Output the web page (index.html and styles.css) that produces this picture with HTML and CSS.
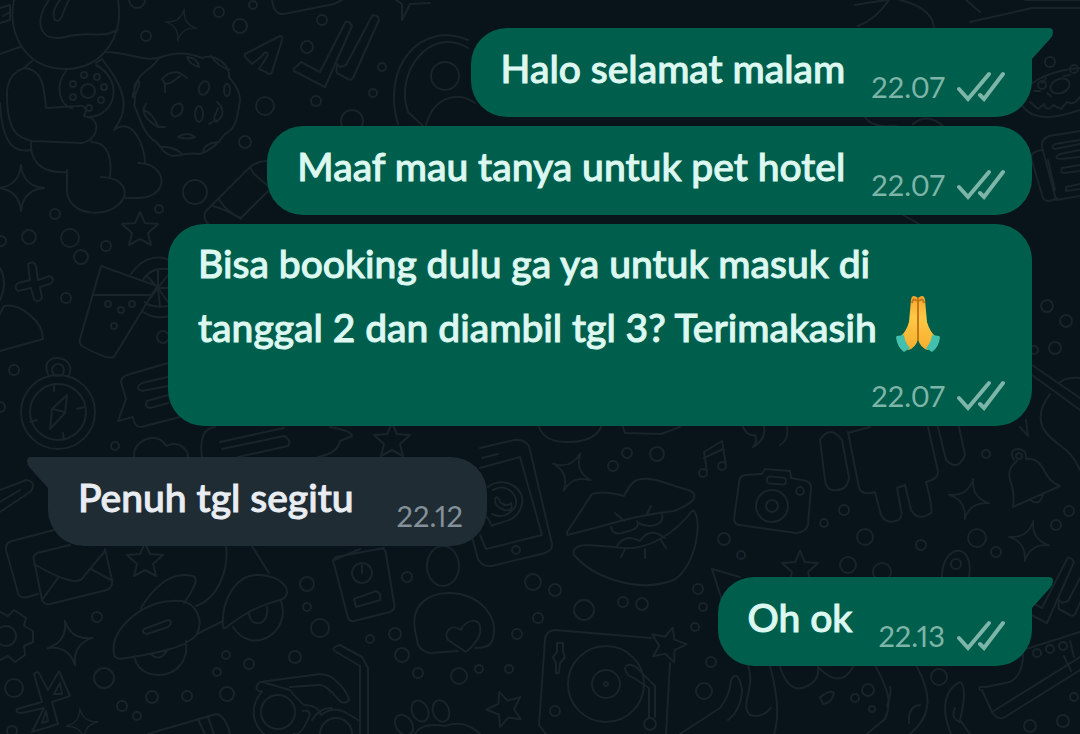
FILE: index.html
```html
<!DOCTYPE html>
<html lang="id">
<head>
<meta charset="utf-8">
<meta name="viewport" content="width=device-width, initial-scale=1">
<title>Chat</title>
<link rel="stylesheet" href="styles.css">
</head>
<body>
<svg class="wallpaper" viewBox="0 0 1080 734" preserveAspectRatio="xMidYMid slice" aria-hidden="true">
  <defs>
    <path id="spark" d="M0-23Q2-2 23 0Q2 2 0 23Q-2 2-23 0Q-2-2 0-23Z"/>
    <path id="star" d="M0-17L5-6L18-5L8 4L11 16L0 10L-11 16L-8 4L-18-5L-5-6Z"/>
    <g id="checks"><path d="M-35 21L-31 17L-12 27L13-22Q14-25 18-22L20-19L-7 42L-38 26Q-40 24-35 21Z"/><path d="M5 19L8 22L14 20L40-29Q42-31 46-28L47-25L21 33Q19 36 16 34L5 28Q4 26 5 19Z"/></g>
  </defs>

  <!-- astronaut -->
  <path d="M14 0C7 35 26 70 68 69C104 67 124 35 118 0M49 0C34 20 38 43 65 37C91 30 104 40 118 29M60 0C53 9 52 15 55 20C62 25 63 9 69 0M0 54L20 47M32 61L24 68C4 75 6 94 8 112C11 134 20 138 32 141L82 143C96 140 101 125 91 118L84 116C88 108 84 105 78 106L46 108C44 90 44 69 24 68M31 142C30 158 38 174 67 172M0 103C2 145 15 153 30 150M91 142C109 142 112 160 110 176M101 177C119 177 127 187 124 197C114 220 67 218 67 190V170M96 63L102 59C120 82 133 105 115 128M114 130C133 115 145 148 145 162M138 163C159 162 169 183 155 193C145 201 130 197 124 198M105 52C125 51 145 63 161 57"/>
  <path d="M66 71C54 86 60 106 72 108M96 65C125 81 115 116 89 117"/>
  <circle cx="88" cy="91" r="7"/><circle cx="84" cy="75" r="3"/><circle cx="97" cy="77" r="3"/><circle cx="104" cy="87" r="3"/><circle cx="101" cy="100" r="3"/><circle cx="89" cy="108" r="3"/><circle cx="73" cy="97" r="3"/><circle cx="73" cy="84" r="3"/>
  <!-- moon -->
  <path d="M138 80C142 70 152 70 159 58C176 51 190 53 202 58C217 53 230 66 229 77C240 90 240 97 240 101C237 117 237 128 225 134C218 143 212 150 200 154C189 152 183 155 173 156C160 153 162 144 152 139C142 130 141 120 134 105C138 96 130 88 138 80ZM138 80Q130 100 134 97Q142 82 138 80M187 57Q190 65 199 67Q198 58 187 57M211 56Q218 66 229 70M162 79Q170 70 180 73L187 78M180 76Q168 86 165 83L165 92M162 79L165 84M146 104Q138 115 158 127L165 127M143 110Q152 112 158 126M160 147Q172 146 181 153M203 151Q205 143 219 142M217 102Q224 108 222 115Q216 126 214 118L218 108M209 124L216 120M178 137Q187 131 195 137Q187 140 178 137"/>
  <ellipse cx="204" cy="88" rx="5" ry="7" transform="rotate(20 204 88)"/><ellipse cx="227" cy="90" rx="3" ry="6"/><ellipse cx="177" cy="110" rx="5" ry="7" transform="rotate(35 177 110)"/><ellipse cx="199" cy="114" rx="4" ry="8"/>
  <!-- tube -->
  <path d="M268 161Q257 161 250 167L206 211Q202 217 208 224M250 167L254 174L268 186M213 206Q225 209 241 219M219 199Q226 212 241 218L268 191"/>
  <!-- cocktail -->
  <path d="M101 266L157 286L114 357Q107 360 82 346Q79 343 80 339ZM93 295H150M131 274C145 253 164 256 172 262M143 312Q155 320 170 316M143 280Q150 267 168 269M158 288L147 276M158 288L149 300M158 288L158 269M158 288L168 275M158 288L168 302M158 288L160 306M158 288L170 288M145 302Q150 308 168 306"/>
  <circle cx="108" cy="304" r="3"/><circle cx="121" cy="310" r="3"/><circle cx="132" cy="304" r="3"/><circle cx="114" cy="326" r="3"/>
  <path d="M28 264Q34 260 36 266L38 280L50 276Q56 280 50 284L40 287L42 298Q38 304 34 299L31 288L18 291Q13 287 18 283L30 280ZM0 268Q8 282 0 300M0 314L4 306C20 303 43 321 43 339L0 351"/>
  <!-- compass -->
  <path d="M49 376C42 364 50 357 58 358C70 359 73 369 68 377"/><circle cx="58" cy="370" r="6"/><circle cx="58" cy="412" r="37"/><circle cx="58" cy="412" r="28"/><path d="M67 395L65 413L50 429L52 409ZM53 409L64 412M54 384V391M30 422L37 420M64 440L63 433M84 407L77 409"/>
  <!-- notes and speech bubble -->
  <path d="M168 363L130 374Q121 376 121 382L126 399L118 421L133 417Q134 427 141 427L180 417M168 377L142 383Q134 388 142 391L168 386M168 395L147 401Q144 407 150 408L168 403M134 457C132 440 158 430 166 446C180 440 188 450 188 457M202 457Q198 429 215 427M330 427Q352 431 352 436L340 441Q338 453 318 457M220 442L284 428M222 449L284 436Q292 440 288 446L238 457M0 490L26 480Q38 482 30 492L0 512M0 502L20 490"/>
  <!-- envelope, gear -->
  <path d="M54 530L12 541Q5 543 6 550L18 593Q20 599 28 597L38 594M70 545L37 553Q32 556 34 560L42 600Q44 605 50 604L107 590Q113 587 112 580L105 549M34 564Q78 590 84 576L105 551M58 578L42 600M91 569L111 580M0 612L8 616L14 610L26 618L24 626L33 631V642L24 646L25 655L15 662L8 656L0 660"/><circle cx="6" cy="636" r="10"/>
  <!-- rocket car -->
  <path d="M114 653C109 629 146 597 181 601C196 603 204 620 197 634C185 650 145 655 120 659Q114 658 114 653ZM141 608C158 580 175 572 193 576Q201 579 184 603M196 606C219 598 229 568 226 546M223 627C221 602 235 573 260 575C287 577 294 596 280 600C253 607 240 617 228 626Q223 630 223 627M252 546L269 573M197 634L223 621M135 659C141 684 191 681 186 641M151 654Q160 663 168 649M233 627C252 657 292 632 281 601M249 613C250 629 270 626 267 607M144 629L168 620Q174 622 168 627L147 634Q141 633 144 629Z"/>
  <!-- bluetooth and glasses -->
  <path d="M34 674Q38 670 40 675L48 690L59 671L70 696L52 702L58 724L32 732L44 708L22 713Q15 713 17 709L42 702ZM54 694L60 683L62 694ZM42 723L46 711L48 721ZM148 734L216 714Q226 716 230 734M198 719L205 734M208 717L214 734M262 692Q252 690 260 682L320 674C337 674 348 695 349 700Q344 706 338 699Q326 684 318 685L290 687M262 682L290 690Q298 700 304 705Q318 705 321 715Q334 705 348 714L360 721M262 691C247 710 255 726 264 734M303 711Q308 709 310 714Q302 736 294 734M360 734V666L338 653Q328 648 340 645L362 657L368 668V734"/><circle cx="278" cy="712" r="17"/><circle cx="336" cy="734" r="16"/><path d="M312 720Q320 707 332 708"/>
  <!-- power tag -->
  <path d="M384 548L336 557Q331 560 334 564L348 618Q350 622 354 621L390 612Q396 609 394 603L386 554Q385 547 380 549M334 560L360 549"/><circle cx="362" cy="573" r="10"/><path d="M362 565V573M354 599L376 591Q382 593 380 600L356 607Z"/>
  <!-- laptop, sent checks, portrait -->
  <path d="M272 0Q274 15 284 14L334 4L342 0M245 54L280 36Q283 36 282 40L272 72Q270 76 266 72L259 69L268 55Q266 49 262 56L252 64L245 57Z"/><use href="#checks" x="332" y="45"/>
  <path d="M468 40C420 20 381 67 398 124M468 48C430 25 394 73 408 112L423 126M426 125C434 96 458 91 475 103M396 0L402 4L402 20L410 4L430 3"/><circle cx="445" cy="76" r="14"/>
  <!-- phone -->
  <path d="M480 448L514 440Q525 439 529 446L552 544Q553 550 545 553L492 566Q482 567 478 559L470 530M480 468L520 457L542 535L486 549L480 535M482 458L498 454"/><path d="M488 487C503 475 526 488 522 504C518 523 500 521 492 526L487 517"/><path d="M493 490C508 482 520 497 515 507C507 518 498 517 492 514M495 499Q497 494 500 502Q506 508 511 503Q514 512 504 510Q494 506 495 499"/>
  <!-- lips -->
  <path d="M567 532L592 494Q603 490 624 496C632 480 637 476 656 480L691 491C701 498 687 506 674 511C635 515 605 526 567 535ZM574 555C570 540 600 546 624 548C650 550 676 532 693 510C703 518 697 565 674 580C634 595 590 574 574 555ZM611 527Q612 535 622 533C633 530 641 528 637 521M638 523C650 529 665 525 662 514M617 546Q625 533 640 541Q650 526 665 538M615 513L624 521M651 506L647 514M621 557L625 549M645 558V549M666 548L661 540M539 427Q545 443 570 442Q595 441 601 427M623 427L625 433L661 434L680 427"/>
  <!-- music and camera -->
  <path d="M707 471L704 452L722 441L726 465M704 458L723 449"/><circle cx="703" cy="473" r="4"/><circle cx="722" cy="466" r="4"/><path d="M743 427Q748 437 755 435Q758 442 753 447Q766 440 764 427M780 445Q789 440 787 427M761 474L745 475Q739 476 739 483L734 519Q735 525 740 525L796 533Q806 532 808 525L811 487Q811 481 802 480L791 478L790 471L765 469L762 474"/><circle cx="772" cy="506" r="16"/><circle cx="772" cy="506" r="6"/><circle cx="800" cy="491" r="4"/><rect x="767" y="477" width="19" height="7" rx="3" transform="rotate(5 776 480)"/>
  <!-- robot and bell -->
  <path d="M820 440Q830 424 842 440L849 478Q847 490 837 490Q827 492 825 480ZM848 432L859 488Q863 496 875 492L881 515Q886 525 899 520Q903 515 901 510L897 488L905 485L911 510Q918 522 931 513Q933 509 926 482Q939 479 938 471L928 427M848 433L870 427M938 427L946 460Q958 472 965 455L959 427M1017 461Q1007 468 1010 480Q1015 492 1013 507L1060 486Q1050 482 1045 472Q1038 457 1026 459M1030 500Q1040 507 1043 494M1014 460Q1008 449 1019 449Q1027 450 1026 459"/><circle cx="1019" cy="456" r="3"/>
  <path d="M1020 427L1028 436L1026 420M1032 375L1080 410M1032 365L1080 398M1080 378Q1067 377 1060 382M1050 394C1028 424 1050 438 1061 446Q1073 454 1080 470M942 577C942 543 975 541 969 577"/><circle cx="956" cy="564" r="5"/>
  <!-- donut and books -->
  <path d="M1025 0L1080 0M970 22L1032 8H1080M980 12L966 0M1080 68C1050 70 1022 83 1020 102C1030 122 1055 119 1080 110M1030 102L1038 109L1044 104Q1047 113 1053 105L1061 109L1067 102Q1074 106 1080 97M1040 91H1034M1051 96L1047 93M1062 93L1066 91M1046 78L1042 83M1064 76L1070 75M1080 131L1049 136Q1041 139 1042 147L1056 200L1080 196M1042 150Q1030 152 1031 158L1043 198Q1047 204 1057 198M1048 160L1055 190M1080 140L1055 144Q1050 147 1055 149L1080 144M1080 150L1060 154Q1053 158 1060 159L1080 157M1080 165L1062 168Q1060 173 1064 173L1080 171M1080 184L1066 187V191L1080 189"/><ellipse cx="1060" cy="86" rx="10" ry="7" transform="rotate(-22 1060 86)"/>
  <use href="#checks" x="1054" y="581"/>
  <path d="M980 690Q977 686 986 687L1010 682Q1024 675 1023 650L1080 632M982 690L992 712Q998 721 1005 717L1080 670M992 712L1080 657M1070 641L1074 657M1064 656L1071 671"/><circle cx="1037" cy="653" r="4"/><circle cx="1050" cy="649" r="4"/><circle cx="1063" cy="646" r="4"/>
  <!-- chick, paw, turntable -->
  <ellipse cx="443" cy="566" rx="16" ry="20"/><path d="M417 639C405 600 435 590 460 594C490 601 501 628 490 644Q486 648 475 648M458 651L430 653Q417 650 417 639M466 652L448 640C442 630 454 624 461 630C466 618 482 618 480 629Q482 638 466 652M415 734Q421 722 445 726Q465 719 480 734"/><ellipse cx="420" cy="711" rx="8" ry="11" transform="rotate(-25 420 711)"/><ellipse cx="441" cy="711" rx="8" ry="11" transform="rotate(-20 441 711)"/><ellipse cx="404" cy="725" rx="8" ry="11" transform="rotate(-35 404 725)"/>
  <path d="M651 638L555 630Q545 631 545 640L539 725L546 734M670 663L666 734M557 643H563V652L565 657L560 663L559 673H556V663L553 657L557 652ZM626 666Q630 663 636 667L655 686V717M625 668Q626 676 634 678L649 688V718"/><circle cx="606" cy="684" r="38"/><circle cx="606" cy="684" r="14"/><circle cx="606" cy="684" r="2"/><circle cx="650" cy="724" r="6"/>
  <!-- foliage along the bottom -->
  <path d="M712 569L728 619M712 569L740 577M680 734L720 708Q730 695 731 680Q738 668 742 690Q741 710 728 720M748 665C756 690 739 704 750 715Q761 719 771 708M770 666Q782 710 774 734M780 667Q789 694 805 687Q820 681 818 667M818 667Q840 690 853 667M876 667C884 683 894 699 885 719Q875 727 867 734M917 667C935 700 928 719 910 734M951 734C939 705 947 688 960 682Q968 687 960 720L970 734M890 687Q892 691 887 706M920 705Q908 706 909 723M955 708Q950 718 960 722M820 697Q831 689 834 693Q832 703 823 704Z"/>
  <path d="M855 5Q884 0 889 0Q875 20 858 26M900 0Q932 8 934 27M865 117Q872 128 896 126M913 124Q927 112 943 126M903 215Q912 220 919 224M0 8L10 5V20L0 23M10 12L3 16"/>
  <use href="#spark" transform="translate(181 25) rotate(12) scale(.7)"/><use href="#spark" x="21" y="188"/><use href="#spark" transform="translate(70 643) rotate(-13)"/><use href="#spark" transform="translate(82 724) rotate(-8) scale(.7)"/><use href="#spark" transform="translate(572 472) rotate(24) scale(.9)"/><use href="#spark" transform="translate(969 499) rotate(12) scale(.9)"/><use href="#spark" transform="translate(1029 541) rotate(12) scale(.9)"/>
  <use href="#star" transform="translate(140 229)"/><use href="#star" transform="translate(145 560)"/><use href="#star" transform="translate(392 440)"/><use href="#star" transform="translate(800 568)"/><use href="#star" transform="translate(505 708) rotate(-20)"/><use href="#star" transform="translate(668 644) rotate(16)"/>
  <!-- bubbles between the doodles -->
  <circle cx="137" cy="0" r="8"/><circle cx="146" cy="36" r="5"/><circle cx="219" cy="12" r="5"/><circle cx="253" cy="5" r="4"/><circle cx="240" cy="26" r="7"/><circle cx="265" cy="106" r="9"/><circle cx="245" cy="142" r="6"/><circle cx="195" cy="192" r="12"/><circle cx="159" cy="209" r="4"/><circle cx="55" cy="214" r="5"/><circle cx="29" cy="237" r="7"/><circle cx="70" cy="238" r="9"/><circle cx="81" cy="257" r="7"/><circle cx="106" cy="246" r="5"/><circle cx="1" cy="241" r="5"/><circle cx="66" cy="298" r="5"/><circle cx="163" cy="337" r="6"/><circle cx="14" cy="370" r="5"/><circle cx="0" cy="407" r="5"/><circle cx="115" cy="446" r="4"/><circle cx="322" cy="20" r="5"/><circle cx="307" cy="47" r="6"/><circle cx="382" cy="67" r="4"/><circle cx="373" cy="93" r="4"/><circle cx="316" cy="101" r="5"/><circle cx="352" cy="121" r="11"/>
  <circle cx="97" cy="617" r="5"/><circle cx="14" cy="688" r="9"/><circle cx="104" cy="678" r="10"/><circle cx="122" cy="706" r="5"/><circle cx="137" cy="716" r="4"/><circle cx="152" cy="697" r="6"/><circle cx="187" cy="696" r="5"/><circle cx="226" cy="655" r="4"/><circle cx="249" cy="664" r="5"/><circle cx="217" cy="672" r="4"/><circle cx="227" cy="694" r="7"/><circle cx="295" cy="657" r="6"/><circle cx="307" cy="584" r="7"/><circle cx="307" cy="607" r="4"/><circle cx="320" cy="628" r="9"/><circle cx="12" cy="731" r="5"/><circle cx="407" cy="577" r="5"/><circle cx="395" cy="634" r="6"/><circle cx="370" cy="639" r="4"/><circle cx="402" cy="655" r="7"/><circle cx="418" cy="673" r="5"/><circle cx="459" cy="676" r="8"/><circle cx="479" cy="669" r="4"/><circle cx="509" cy="669" r="4"/><circle cx="517" cy="634" r="5"/><circle cx="538" cy="618" r="5"/><circle cx="533" cy="582" r="8"/><circle cx="555" cy="590" r="6"/><circle cx="584" cy="610" r="10"/><circle cx="623" cy="602" r="5"/><circle cx="642" cy="604" r="6"/><circle cx="555" cy="711" r="5"/><circle cx="516" cy="550" r="4"/>
  <circle cx="613" cy="466" r="5"/><circle cx="627" cy="453" r="5"/><circle cx="657" cy="454" r="7"/><circle cx="724" cy="539" r="6"/><circle cx="741" cy="555" r="4"/><circle cx="698" cy="589" r="5"/><circle cx="703" cy="607" r="4"/><circle cx="695" cy="627" r="4"/><circle cx="711" cy="662" r="5"/><circle cx="704" cy="691" r="8"/><circle cx="824" cy="523" r="4"/><circle cx="844" cy="510" r="5"/><circle cx="865" cy="537" r="8"/><circle cx="921" cy="545" r="5"/><circle cx="977" cy="538" r="9"/><circle cx="996" cy="552" r="5"/><circle cx="986" cy="454" r="4"/><circle cx="1056" cy="525" r="5"/><circle cx="1069" cy="511" r="5"/><circle cx="848" cy="565" r="8"/><circle cx="882" cy="572" r="9"/><circle cx="1050" cy="62" r="5"/><circle cx="1074" cy="69" r="4"/><circle cx="1042" cy="85" r="4"/><circle cx="1047" cy="306" r="6"/><circle cx="1066" cy="321" r="6"/><circle cx="1034" cy="350" r="4"/><circle cx="1055" cy="348" r="6"/><circle cx="939" cy="677" r="8"/><circle cx="868" cy="690" r="6"/><circle cx="855" cy="698" r="4"/><circle cx="872" cy="709" r="3"/><circle cx="1030" cy="726" r="6"/><circle cx="1063" cy="721" r="6"/><circle cx="1074" cy="697" r="4"/>
</svg>

<svg class="symbols" aria-hidden="true">
  <symbol id="read" viewBox="0 0 48 32"><path d="M2 18L11 28L32 3M23 24L27 28L46 3" fill="none" stroke="currentColor" stroke-width="4" stroke-linecap="round" stroke-linejoin="miter"/></symbol>
  <symbol id="tail" viewBox="0 0 22 32"><path d="M0 0H17Q21 0 21 4Q21 8 18 11L0 31Z" fill="currentColor"/></symbol>
</svg>

<main class="chat">
  <article class="message sent with-tail">
    <svg class="tail" aria-hidden="true"><use href="#tail"/></svg>
    <p class="text">Halo selamat malam</p>
    <div class="meta"><time>22.07</time><svg class="ticks" role="img" aria-label="Terkirim"><use href="#read"/></svg></div>
  </article>
  <article class="message sent">
    <p class="text">Maaf mau tanya untuk pet hotel</p>
    <div class="meta"><time>22.07</time><svg class="ticks" role="img" aria-label="Terkirim"><use href="#read"/></svg></div>
  </article>
  <article class="message sent long">
    <p class="text">Bisa booking dulu ga ya untuk masuk di<br>tanggal 2 dan diambil tgl 3? Terimakasih
      <svg class="emoji" viewBox="0 0 46 60" role="img" aria-label="🙏">
        <defs><linearGradient id="skin" x2="0" y2="1"><stop stop-color="#f6a52d"/><stop offset=".4" stop-color="#ffc846"/><stop offset="1" stop-color="#f5ae2c"/></linearGradient></defs>
        <path d="M23 4Q17-1 16 6L14 28Q11 38 5 43L13 56Q21 54 23 45Q25 54 33 56L41 43Q35 38 32 28L30 6Q29-1 23 4Z" fill="url(#skin)"/>
        <path d="M23 4V46M17 9Q18 3 22 7M24 7Q28 3 29 9" fill="none" stroke="#c47718" stroke-width="2"/>
        <path d="M2 42L9 41Q10 49 15 54L9 58Q2 53 1 43ZM44 42L37 41Q36 49 31 54L37 58Q44 53 45 43Z" fill="#43bfae"/>
      </svg></p>
    <div class="meta"><time>22.07</time><svg class="ticks" role="img" aria-label="Terkirim"><use href="#read"/></svg></div>
  </article>
  <article class="message received with-tail">
    <svg class="tail" aria-hidden="true"><use href="#tail"/></svg>
    <p class="text">Penuh tgl segitu</p>
    <div class="meta"><time>22.12</time></div>
  </article>
  <article class="message sent with-tail">
    <svg class="tail" aria-hidden="true"><use href="#tail"/></svg>
    <p class="text">Oh ok</p>
    <div class="meta"><time>22.13</time><svg class="ticks" role="img" aria-label="Terkirim"><use href="#read"/></svg></div>
  </article>
</main>
</body>
</html>
```
FILE: styles.css
```css
* { box-sizing: border-box; }

body {
  margin: 0;
  min-height: 100vh;
  position: relative;
  overflow-x: hidden;
  background: #08131a;
  font-family: Lato, "Open Sans", sans-serif;
}

.wallpaper {
  position: absolute;
  inset: 0;
  width: 100%;
  height: 100%;
  fill: none;
  stroke: #18232a;
  stroke-width: 2;
  stroke-linejoin: round;
  stroke-linecap: round;
}

.symbols {
  position: absolute;
  width: 0;
  height: 0;
}

.chat {
  position: relative;
  display: flex;
  flex-direction: column;
  gap: 9px;
  padding: 28px 48px 68px;
}

.message {
  position: relative;
  display: flex;
  align-items: flex-end;
  gap: 26px;
  max-width: 80vw;
  padding: 9px 27px 14px 30px;
  border-radius: 36px;
}

.sent {
  align-self: flex-end;
  background: #005e4c;
  color: #dcf8f0;
}

.sent.with-tail { border-top-right-radius: 0; }

.received {
  align-self: flex-start;
  gap: 43px;
  margin: 22px 0;
  padding-right: 24px;
  border-top-left-radius: 0;
  background: #1f2c34;
  color: #e9edf2;
}

.long {
  width: 80vw;
  flex-direction: column;
  align-items: stretch;
  gap: 22px;
}

.text {
  margin: 0;
  font-size: 39px;
  font-weight: 500;
  line-height: 62px;
  -webkit-text-stroke: 1px currentColor;
}

.long .text { line-height: 61px; }

.message:not(.long) .text { margin-bottom: 4px; }

.meta {
  display: flex;
  justify-content: flex-end;
  align-items: center;
  gap: 12px;
  color: #7db5a8;
  font-size: 29px;
  font-variant-numeric: proportional-nums;
  line-height: 32px;
}

.received .meta { color: #84919a; }

.ticks {
  width: 48px;
  height: 32px;
}

.tail {
  position: absolute;
  top: 0;
  left: 100%;
  width: 22px;
  height: 32px;
  color: #005e4c;
}

.received .tail {
  right: 100%;
  left: auto;
  color: #1f2c34;
  transform: scaleX(-1);
}

.emoji {
  width: 46px;
  height: 60px;
  margin-left: 8px;
  vertical-align: -12px;
}
```
